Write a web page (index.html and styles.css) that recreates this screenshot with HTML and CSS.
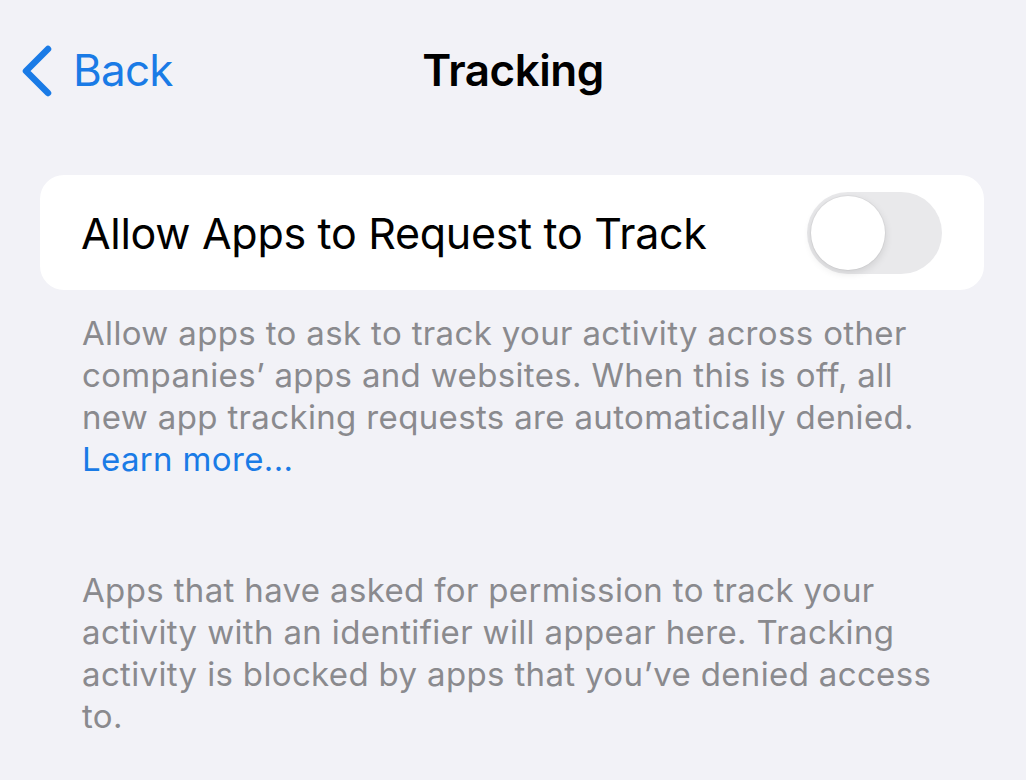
FILE: index.html
```html
<!DOCTYPE html>
<html lang="en">

<head>
    <meta charset="UTF-8">
    <title>Tracking</title>
    <link rel="stylesheet" href="styles.css">
</head>

<body>
    <div class="screen">
        <div class="nav">
            <a class="back" href="#">
                <svg class="chevron" width="32" height="52" viewBox="0 0 32 52">
                    <path d="M28 4 L6 26 L28 48" fill="none" stroke="currentColor" stroke-width="6.5" stroke-linecap="round" stroke-linejoin="round" />
                </svg>
                <span>Back</span>
            </a>
            <h1 class="title">Tracking</h1>
            <div></div>
        </div>

        <div class="card">
            <span class="label">Allow Apps to Request to Track</span>
            <div class="toggle">
                <div class="knob"></div>
            </div>
        </div>

        <p class="footer first">
            Allow apps to ask to track your activity across other companies’ apps and websites. When this is off, all new app tracking requests are automatically denied.
            <a class="link" href="#">Learn more...</a>
        </p>

        <p class="footer second">
            Apps that have asked for permission to track your activity with an identifier will appear here. Tracking activity is blocked by apps that you’ve denied access to.
        </p>
    </div>
</body>

</html>
```

FILE: styles.css
```css
body {
    margin: 0;
    background: #f2f2f7;
    font-family: 'Inter', 'Noto Sans', sans-serif;
    color: #000;
}

.screen {
    width: 1026px;
    height: 780px;
    overflow: hidden;
}

/* Navigation bar */
.nav {
    display: grid;
    grid-template-columns: 1fr auto 1fr;
    align-items: center;
    padding-top: 43px;
    height: 52px;
}

.back {
    display: flex;
    align-items: center;
    gap: 21px;
    padding-left: 20px;
    color: #1a7be6;
    text-decoration: none;
    font-size: 44px;
    line-height: 52px;
    letter-spacing: -0.8px;
}

.chevron {
    display: block;
    margin-top: 2px;
}

.title {
    margin: 0;
    font-size: 44px;
    line-height: 52px;
    font-weight: 600;
    letter-spacing: -0.5px;
}

/* Toggle card */
.card {
    margin: 80px 42px 0 40px;
    height: 115px;
    background: #fff;
    border-radius: 24px;
    display: flex;
    align-items: center;
    justify-content: space-between;
    padding: 0 42px 0 41px;
}

.label {
    font-size: 43px;
    letter-spacing: -0.3px;
}

.toggle {
    width: 135px;
    height: 82px;
    border-radius: 41px;
    background: #e9e9eb;
    display: flex;
    align-items: center;
    padding: 0 4px;
    box-sizing: border-box;
}

.knob {
    width: 74px;
    height: 74px;
    border-radius: 50%;
    background: #fff;
    box-shadow: 0 3px 8px rgba(0, 0, 0, 0.12), 0 0 0 1px rgba(0, 0, 0, 0.04);
}

/* Footer notes */
.footer {
    margin: 0;
    padding: 0 80px 0 82px;
    font-size: 33px;
    line-height: 42px;
    letter-spacing: 0.35px;
    color: #8a8a8e;
}

.footer.first {
    margin-top: 22px;
}

.footer.second {
    margin-top: 89px;
}

.link {
    color: #1a7be6;
    text-decoration: none;
}
```
